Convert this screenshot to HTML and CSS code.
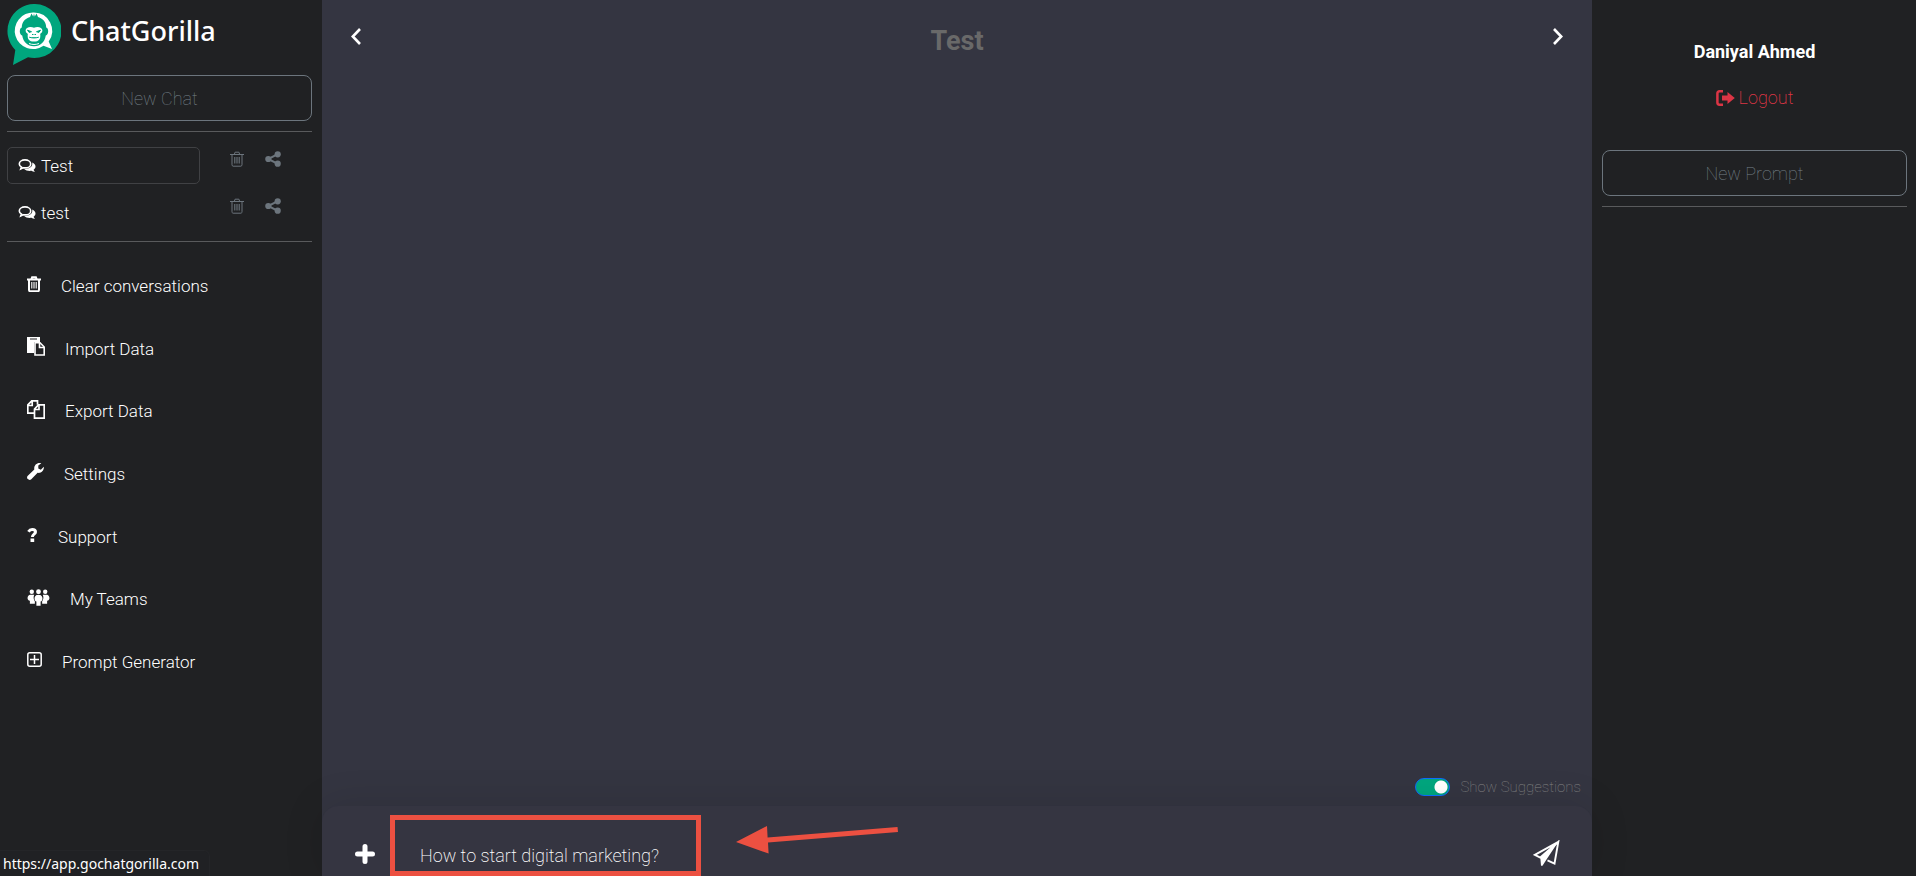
FILE: index.html
```
<!DOCTYPE html>
<html lang="en">
<head>
  <meta charset="UTF-8" />
  <meta name="viewport" content="width=device-width, initial-scale=1.0"/>
  <title>ChatGorilla</title>
  <link rel="stylesheet" href="styles.css">
</head>
<body>

  <!-- shared icons -->
  <svg class="sprite" aria-hidden="true">
    <symbol id="i-chats" viewBox="0 0 18 16">
      <path d="M7 1.9c3.2 0 5.700 1.700 5.700 4s-2.500 4-5.700 4c-.7 0-1.300-.1-1.900-.2L2.700 11l.6-2.100C2.100 8.200 1.300 7.100 1.300 5.900c0-2.300 2.500-4 5.700-4z" fill="none" stroke="currentColor" stroke-width="1.600"/>
      <path d="M14.200 4.600c2 .8 3.300 2.300 3.300 4 0 1.300-.7 2.400-1.900 3.200.2.800.7 1.400 1.400 2-1.300.1-2.500-.2-3.500-1-3 .5-5.800-.3-7.300-1.800 4.600.2 9-2 8-6.400z" fill="currentColor"/>
    </symbol>
    <symbol id="i-trash" viewBox="0 0 14 16">
      <path d="M0 3.500h14M4.300 3.300l.8-2.100h3.800l.8 2.100M2 3.500v10.200c0 .8.400 1.500 1.100 1.500h7.800c.7 0 1.100-.7 1.100-1.500V3.500" fill="none" stroke="currentColor"/>
      <path d="M4.800 6v6.500M7 6v6.500M9.200 6v6.500" fill="none" stroke="currentColor" stroke-width="1.100"/>
    </symbol>
    <symbol id="i-share" viewBox="0 0 16 16">
      <path d="M12.800 3.200L3.200 8l9.600 4.800" fill="none" stroke="currentColor" stroke-width="2"/>
      <circle cx="12.700" cy="3.300" r="3.100" fill="currentColor"/>
      <circle cx="3.300" cy="8" r="3.100" fill="currentColor"/>
      <circle cx="12.700" cy="12.700" r="3.100" fill="currentColor"/>
    </symbol>
  </svg>

  <div class="container">
    <aside class="sidebar">
      <a href="#" class="logo">
        <svg width="54" height="62" viewBox="0 0 54 62" aria-hidden="true">
          <path d="M27 0a27 27 0 1 1-6 53.200L6 61l2.300-15A27 27 0 0 1 27 0z" fill="#00a67e"/>
          <path d="M27 8.500a18.300 18.300 0 0 1 14.700 29L45 45l-8.500-3.200A18.300 18.300 0 1 1 27 8.500z" fill="#fff"/>
          <path d="M24.500 9.500l1.700 3 .8-3 .8 3 1.700-3 1.500 3.400c5.500 1.700 8.200 5.500 8.200 10.600 2.600.3 2.800 7.500-.4 8-1 6.500-5.400 10.700-11.800 10.700S16.200 38 15.200 31.500c-3.200-.5-3-7.700-.4-8 0-5.100 2.700-8.900 8.200-10.600z" fill="#00a67e"/>
          <path d="M27 23.800c-3.200-1.800-8.400-.8-8.400 2.800 0 2 1.500 2.700 2.200 3.400-.7 5.300 1.400 7.600 6.200 7.600s6.900-2.300 6.200-7.600c.7-.7 2.200-1.400 2.200-3.400 0-3.600-5.200-4.600-8.400-2.800z" fill="#fff"/>
          <path d="M20.500 26.200l4 1.500-2.400.7zM33.500 26.200l-4 1.500 2.400.7zM25 30.500h1.500M27.500 30.500H29M22.200 33.200c3 1 6.600 1 9.600 0" fill="#00a67e" stroke="#00a67e" stroke-width="1"/>
          <path d="M22 39.500c3 1.300 7 1.300 10 0" fill="none" stroke="#fff" stroke-width="1"/>
        </svg>
        <span>ChatGorilla</span>
      </a>

      <button class="outline-btn">New Chat</button>
      <hr>

      <ul class="chats">
        <li>
          <a href="#" class="chat active"><svg width="18" height="16"><use href="#i-chats"/></svg>Test</a>
          <button class="icon-btn" aria-label="Delete"><svg width="14" height="16"><use href="#i-trash"/></svg></button>
          <button class="icon-btn" aria-label="Share"><svg width="16" height="16"><use href="#i-share"/></svg></button>
        </li>
        <li>
          <a href="#" class="chat"><svg width="18" height="16"><use href="#i-chats"/></svg>test</a>
          <button class="icon-btn" aria-label="Delete"><svg width="14" height="16"><use href="#i-trash"/></svg></button>
          <button class="icon-btn" aria-label="Share"><svg width="16" height="16"><use href="#i-share"/></svg></button>
        </li>
      </ul>
      <hr>

      <nav class="menu">
        <a href="#"><svg class="bold" width="14" height="16"><use href="#i-trash"/></svg>Clear conversations</a>
        <a href="#">
          <svg width="18" height="19" viewBox="0 0 18 19"><path d="M0 0h13v5H7v11H0z" fill="currentColor"/><path d="M3 2h7" stroke="#202123"/><path d="M8 5.800h5l4.200 4.200v8H8z" fill="#202123" stroke="currentColor" stroke-width="1.600"/><path d="M12.500 6v4.500H17" fill="none" stroke="currentColor" stroke-width="1.600"/></svg>Import Data</a>
        <a href="#">
          <svg width="18" height="19" viewBox="0 0 18 19" fill="none" stroke="currentColor" stroke-width="1.700"><path d="M7.500 13.200H.8V5l4-4.200h5.700v4M5.200 1v4.500H1"/><path d="M11.500 4.800h5.700v13.400H7.500V9zM12 5v4.500H7.700"/></svg>Export Data</a>
        <a href="#">
          <svg width="17" height="17" viewBox="0 0 17 17"><path d="M16.800 3.800c.5 3.600-2.500 6.700-6.200 6L4.300 16.200c-1.200 1.200-2.700.7-3.500-.1-.9-.9-1.100-2.200 0-3.300l6.500-6.300C6.700 2.500 9.800-.8 14.300.3l-3 2.300v2.900l2.500 1.300z" fill="currentColor"/></svg>Settings</a>
        <a href="#">
          <svg width="11" height="14" viewBox="0 0 11 14"><path d="M1.500 3.800C2.400 2.300 3.600 1.600 5.200 1.600c1.900 0 3.300 1 3.300 2.500 0 2.200-3.100 2-3.100 4.900" fill="none" stroke="currentColor" stroke-width="3"/><path d="M3.500 10.500h3.700V14H3.500z" fill="currentColor"/></svg>Support</a>
        <a href="#">
          <svg width="23" height="17" viewBox="0 0 24 17" fill="currentColor"><circle cx="5" cy="2.500" r="2.300"/><circle cx="12" cy="2.500" r="2.500"/><circle cx="19" cy="2.500" r="2.300"/><path d="M3 5.500h4.500C6.500 8 6.800 11 8.200 12.500V15H3v-3C-.6 11 .2 6.500 3 5.500zM21 5.500h-4.500c1 2.500.7 5.500-.7 7V15H21v-3c3.600-1 2.800-5.500 0-6.500zM10 5.800h4c2.800 1.400 2.800 6 .2 7V17H9.800v-4.200c-2.600-1-2.600-5.600.2-7z"/></svg>My Teams</a>
        <a href="#">
          <svg width="15" height="15" viewBox="0 0 15 15" fill="none" stroke="currentColor" stroke-width="1.500"><rect x=".8" y=".8" width="13.400" height="13.400" rx="2"/><path d="M7.500 3v9M3 7.500h9"/></svg>Prompt Generator</a>
      </nav>
    </aside>

    <main class="main">
      <header class="top-bar">
        <button class="arrow-btn" aria-label="Hide sidebar">
          <svg width="10" height="17" viewBox="0 0 10 17"><path d="M9 1L1.800 8.500 9 16" fill="none" stroke="currentColor" stroke-width="2.600"/></svg>
        </button>
        <h1>Test</h1>
        <button class="arrow-btn" aria-label="Hide prompts">
          <svg width="10" height="17" viewBox="0 0 10 17"><path d="M1 1l7.200 7.500L1 16" fill="none" stroke="currentColor" stroke-width="2.600"/></svg>
        </button>
      </header>

      <label class="suggestions"><input type="checkbox" role="switch" checked>Show Suggestions</label>

      <form class="composer">
        <button type="button" class="plus" aria-label="Add">
          <svg width="20" height="20" viewBox="0 0 20 20"><path d="M10 2.500v15M2.500 10h15" stroke="currentColor" stroke-width="5" stroke-linecap="round"/></svg>
        </button>
        <input type="text" aria-label="Message" value="How to start digital marketing?">
        <button type="button" class="send" aria-label="Send">
          <svg width="27" height="27" viewBox="0 0 27 27"><path d="M25.300 1.800L1.800 14.800l5.500 2.700L25.300 1.800 21.500 23.500l-7-3.200" fill="none" stroke="currentColor" stroke-width="1.900"/><path d="M7.300 17.500L25.300 1.800 13.500 19.500 9.500 25.800H8z" fill="currentColor"/></svg>
        </button>
        <div class="highlight"></div>
        <svg class="pointer" width="164" height="30" viewBox="0 0 164 30"><path d="M0 16L31 0l.6 11.500L161.500 1l.5 5L32 16.500l.6 11z" fill="#ec5041"/></svg>
      </form>
    </main>

    <aside class="prompts">
      <strong class="user-name">Daniyal Ahmed</strong>
      <a href="#" class="logout">
        <svg width="19" height="16" viewBox="0 0 19 16"><path d="M7 1.300H3.500c-1.300 0-2.100.8-2.100 2.100v9.200c0 1.300.8 2.100 2.100 2.100H7" fill="none" stroke="currentColor" stroke-width="2.500"/><path d="M6 5.500h5.500V2l7.300 6-7.300 6v-3.500H6z" fill="currentColor"/></svg>Logout</a>
      <button class="outline-btn">New Prompt</button>
      <hr>
    </aside>
  </div>

  <div class="link-status">https://app.gochatgorilla.com</div>

</body>
</html>
```
FILE: styles.css
```
* {
  box-sizing: border-box;
}

body {
  margin: 0;
  font-family: Roboto, sans-serif;
  font-size: 18px;
  font-weight: 200;
  background-color: #343541;
  color: white;
}

a {
  color: inherit;
  text-decoration: none;
}

button {
  padding: 0;
  border: none;
  background: none;
  color: inherit;
  font: inherit;
  cursor: pointer;
}

svg {
  display: block;
  flex-shrink: 0;
}

hr {
  width: 100%;
  margin: 10px 0 15px;
  border: none;
  border-top: 1px solid #595a5c;
}

.sprite {
  position: absolute;
  width: 0;
  height: 0;
}

.container {
  display: flex;
  min-height: 100vh;
}

.sidebar {
  width: 322px;
  padding: 4px 10px 20px 7px;
  background-color: #202123;
}

.logo {
  display: flex;
  gap: 10px;
  margin-bottom: 9px;
  font-family: "Noto Sans", sans-serif;
  font-size: 27px;
  font-weight: 500;
  line-height: 54px;
}

.outline-btn {
  width: 100%;
  height: 46px;
  border: 1px solid #6c757d;
  border-radius: 8px;
  color: #77818a;
  font-weight: 100;
}

.chats {
  display: flex;
  flex-direction: column;
  gap: 10px;
  margin: 0;
  padding: 0;
  list-style: none;
}

.chats li {
  display: flex;
}

.chat {
  display: flex;
  align-items: center;
  gap: 5px;
  width: 193px;
  height: 37px;
  margin-right: 30px;
  padding: 0 10px;
  border: 1px solid transparent;
  border-radius: 5px;
  font-size: 17px;
  font-weight: 300;
}

.chat.active {
  border-color: #404144;
}

.icon-btn {
  height: 24px;
  margin-right: 21px;
  color: #6c757d;
}

.chats + hr {
  margin: 10px 0 13px;
}

.menu {
  display: grid;
  grid-auto-rows: 1fr;
  height: 438px;
  font-size: 17px;
  font-weight: 300;
}

.menu a {
  display: flex;
  align-items: center;
  gap: 20px;
  padding-left: 20px;
}

.menu svg {
  margin-bottom: 4px;
}

.menu .bold {
  stroke-width: 2px;
}

.main {
  flex: 1;
  display: flex;
  flex-direction: column;
  min-width: 0;
}

.top-bar {
  display: flex;
  justify-content: space-between;
  padding: 24px 29px;
}

.top-bar h1 {
  margin: 0;
  color: #696969;
  font-size: 27px;
  font-weight: 700;
  line-height: 34px;
}

.arrow-btn {
  height: 24px;
}

.suggestions {
  display: flex;
  align-items: center;
  align-self: flex-end;
  gap: 10px;
  margin-top: auto;
  padding: 0 11px 10px;
  color: #858585;
  font-size: 15px;
  font-weight: 100;
}

.suggestions input {
  appearance: none;
  width: 35px;
  height: 18px;
  margin: 0;
  border: 1px solid #0d6efd;
  border-radius: 9px;
  background: radial-gradient(circle at 25px 8px, #fff 6px, #00a67e 7px);
}

.composer {
  position: relative;
  display: flex;
  align-items: center;
  gap: 45px;
  height: 70px;
  padding: 25px 32px 0 33px;
  border-radius: 16px 16px 0 0;
  background-color: #353541;
  box-shadow: 0 0 40px rgba(0, 0, 0, 0.12);
}

.composer input {
  flex: 1;
  min-width: 0;
  padding: 4px 0 0;
  border: none;
  outline: none;
  background: none;
  color: white;
  font: inherit;
}

.highlight {
  position: absolute;
  top: 9px;
  left: 68px;
  width: 311px;
  height: 61px;
  border: 5px solid #ec5041;
}

.pointer {
  position: absolute;
  top: 20px;
  left: 414px;
}

.prompts {
  display: flex;
  flex-direction: column;
  width: 324px;
  padding: 40px 9px 40px 10px;
  background-color: #202123;
}

.user-name {
  align-self: center;
  font-weight: 700;
  line-height: 24px;
}

.logout {
  display: flex;
  align-items: center;
  align-self: center;
  gap: 4px;
  margin: 22px 0 40px;
  color: #dc3545;
  line-height: 24px;
}

.link-status {
  position: fixed;
  bottom: 0;
  left: 0;
  width: 210px;
  height: 26px;
  padding-left: 3px;
  border-top: 1px solid #242528;
  border-right: 1px solid #242528;
  border-radius: 0 6px 0 0;
  background-color: #202124;
  font-family: "Noto Sans", sans-serif;
  font-size: 14px;
  font-weight: 400;
  line-height: 26px;
}
```
